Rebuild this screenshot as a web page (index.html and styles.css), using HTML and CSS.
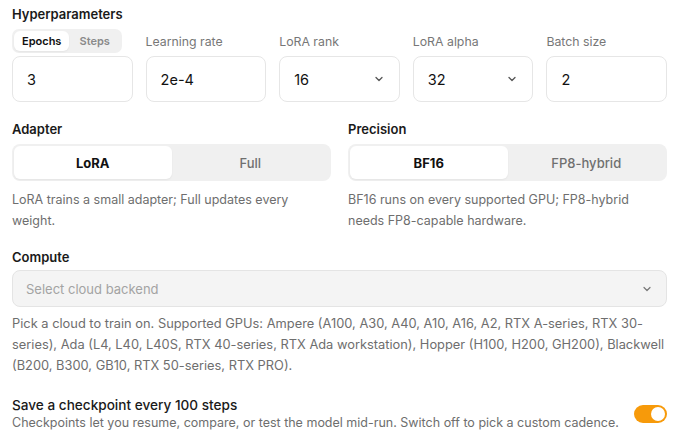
FILE: index.html
```html
<!DOCTYPE html>
<html lang="en">
<head>
    <meta charset="UTF-8">
    <title>Training settings</title>
    <link rel="stylesheet" href="styles.css">
</head>
<body>
    <section class="section">
        <h2 class="heading">Hyperparameters</h2>
        <div class="params">
            <div class="field">
                <div class="seg seg-small">
                    <span class="seg-item active">Epochs</span>
                    <span class="seg-item">Steps</span>
                </div>
                <div class="input">3</div>
            </div>
            <div class="field">
                <label class="label">Learning rate</label>
                <div class="input">2e-4</div>
            </div>
            <div class="field">
                <label class="label">LoRA rank</label>
                <div class="input select">16
                    <svg class="chev" width="12" height="12" viewBox="0 0 12 12"><path d="M3 4.5l3 3 3-3" fill="none" stroke="#555" stroke-width="1.3" stroke-linecap="round" stroke-linejoin="round"/></svg>
                </div>
            </div>
            <div class="field">
                <label class="label">LoRA alpha</label>
                <div class="input select">32
                    <svg class="chev" width="12" height="12" viewBox="0 0 12 12"><path d="M3 4.5l3 3 3-3" fill="none" stroke="#555" stroke-width="1.3" stroke-linecap="round" stroke-linejoin="round"/></svg>
                </div>
            </div>
            <div class="field">
                <label class="label">Batch size</label>
                <div class="input">2</div>
            </div>
        </div>
    </section>

    <div class="two-col">
        <section class="section">
            <h2 class="heading">Adapter</h2>
            <div class="seg seg-wide">
                <span class="seg-item active">LoRA</span>
                <span class="seg-item">Full</span>
            </div>
            <p class="help">LoRA trains a small adapter; Full updates every weight.</p>
        </section>
        <section class="section">
            <h2 class="heading">Precision</h2>
            <div class="seg seg-wide">
                <span class="seg-item active">BF16</span>
                <span class="seg-item">FP8-hybrid</span>
            </div>
            <p class="help">BF16 runs on every supported GPU; FP8-hybrid needs FP8-capable hardware.</p>
        </section>
    </div>

    <section class="section compute">
        <h2 class="heading">Compute</h2>
        <div class="backend">
            <span>Select cloud backend</span>
            <svg class="chev" width="12" height="12" viewBox="0 0 12 12"><path d="M3 4.5l3 3 3-3" fill="none" stroke="#777" stroke-width="1.2" stroke-linecap="round" stroke-linejoin="round"/></svg>
        </div>
        <p class="help help-wide">Pick a cloud to train on. Supported GPUs: Ampere (A100, A30, A40, A10, A16, A2, RTX A-series, RTX 30-series), Ada (L4, L40, L40S, RTX 40-series, RTX Ada workstation), Hopper (H100, H200, GH200), Blackwell (B200, B300, GB10, RTX 50-series, RTX PRO).</p>
    </section>

    <div class="checkpoint">
        <div>
            <div class="cp-title">Save a checkpoint every 100 steps</div>
            <div class="cp-sub">Checkpoints let you resume, compare, or test the model mid-run. Switch off to pick a custom cadence.</div>
        </div>
        <span class="toggle"><span class="knob"></span></span>
    </div>
</body>
</html>
```

FILE: styles.css
```css
body {
    margin: 0;
    padding: 6px 18px 0 12px;
    font-family: Inter, "Noto Sans", sans-serif;
    color: #1a1a1a;
    background: #fff;
}
.section {
    margin: 0;
}
.heading {
    font-size: 13px;
    font-weight: 600;
    margin: 0 0 7px;
    line-height: 16px;
}
.params {
    display: grid;
    grid-template-columns: repeat(5, 1fr);
    gap: 13px;
}
.field {
    display: flex;
    flex-direction: column;
}
.label {
    font-size: 12.3px;
    color: #777;
    height: 24px;
    line-height: 26px;
    margin-bottom: 3px;
}
.input {
    height: 46px;
    box-sizing: border-box;
    border: 1px solid #e6e6e6;
    border-radius: 8px;
    padding: 0 14px;
    display: flex;
    align-items: center;
    font-size: 14.5px;
    color: #111;
}
.select {
    justify-content: space-between;
}
.seg {
    display: flex;
    background: #f0f0f0;
    border-radius: 8px;
    padding: 2px;
    box-sizing: border-box;
}
.seg-small {
    width: 110px;
    height: 24px;
    margin-bottom: 3px;
    border-radius: 7px;
}
.seg-small .seg-item {
    font-size: 11px;
    padding: 0 8px;
    color: #8a8a8a;
}
.seg-small .seg-item.active {
    color: #111;
}
.seg-item {
    flex: 1;
    display: flex;
    align-items: center;
    justify-content: center;
    font-size: 13px;
    font-weight: 600;
    color: #6f6f6f;
    border-radius: 6px;
}
.seg-item.active {
    background: #fff;
    color: #111;
    box-shadow: 0 1px 2px rgba(0, 0, 0, 0.05);
}
.seg-wide {
    height: 37px;
}
.seg-wide .seg-item {
    font-weight: 500;
}
.seg-wide .seg-item.active {
    font-weight: 700;
}
.two-col {
    display: grid;
    grid-template-columns: 1fr 1fr;
    gap: 17px;
    margin-top: 19px;
}
.help {
    font-size: 12.5px;
    line-height: 21px;
    color: #6e6e6e;
    margin: 8px 0 0;
}
.compute {
    margin-top: 18px;
}
.compute .heading {
    margin-bottom: 5px;
}
.help-wide {
    font-size: 12.85px;
    margin-top: 6px;
}
.backend {
    height: 37px;
    box-sizing: border-box;
    background: #f4f4f4;
    border: 1px solid #e4e4e4;
    border-radius: 8px;
    padding: 0 13px;
    display: flex;
    align-items: center;
    justify-content: space-between;
    font-size: 13px;
    color: #a3a3a3;
}
.checkpoint {
    display: flex;
    align-items: center;
    justify-content: space-between;
    margin-top: 20px;
}
.cp-title {
    font-size: 13.6px;
    font-weight: 500;
    color: #1a1a1a;
    line-height: 18px;
}
.cp-sub {
    font-size: 12.5px;
    color: #6e6e6e;
    line-height: 18px;
}
.toggle {
    width: 33px;
    height: 18px;
    border-radius: 9px;
    background: #f79a0a;
    position: relative;
    flex-shrink: 0;
}
.knob {
    position: absolute;
    right: 2px;
    top: 2px;
    width: 14px;
    height: 14px;
    border-radius: 50%;
    background: #fff;
}
```
